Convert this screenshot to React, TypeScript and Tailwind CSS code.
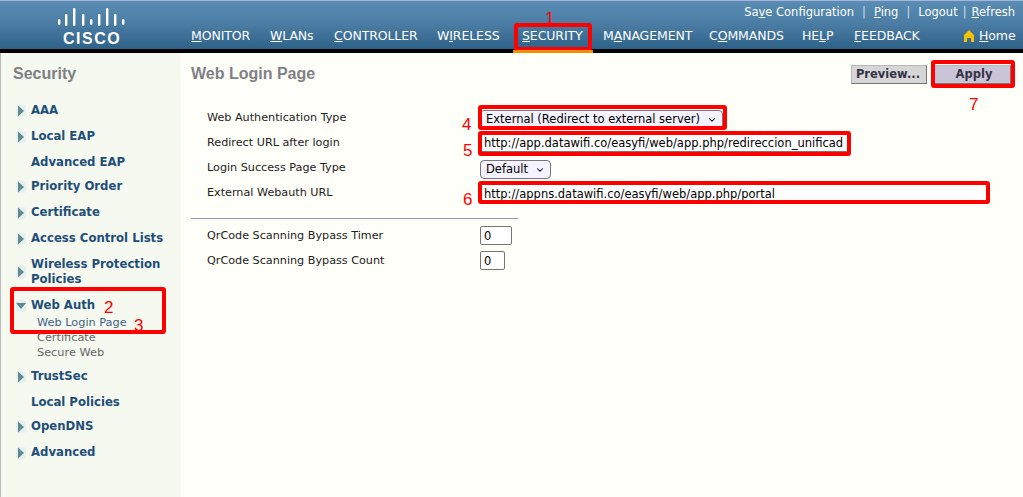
import { ChevronDown } from 'lucide-react';

const font = "font-['DejaVu_Sans',Verdana,sans-serif]";

const navItems = [
  { pre: '', key: 'M', post: 'ONITOR', w: 'w-[79px]' },
  { pre: '', key: 'W', post: 'LANs', w: 'w-[64px]' },
  { pre: '', key: 'C', post: 'ONTROLLER', w: 'w-[103px]' },
  { pre: 'W', key: 'I', post: 'RELESS', w: 'w-[85px]' },
  { pre: '', key: 'S', post: 'ECURITY', w: 'w-[81px]' },
  { pre: 'M', key: 'A', post: 'NAGEMENT', w: 'w-[106px]' },
  { pre: 'C', key: 'O', post: 'MMANDS', w: 'w-[93px]' },
  { pre: 'HE', key: 'L', post: 'P', w: 'w-[52px]' },
  { pre: '', key: 'F', post: 'EEDBACK', w: 'w-[109px]' },
];

const sideItems = [
  { label: 'AAA', arrow: true, h: 'h-[26px] pt-[2px]' },
  { label: 'Local EAP', arrow: true, h: 'h-[26px] pt-[2px]' },
  { label: 'Advanced EAP', arrow: false, h: 'h-[24px] pt-[4px]' },
  { label: 'Priority Order', arrow: true, h: 'h-[26px] pt-[2px]' },
  { label: 'Certificate', arrow: true, h: 'h-[26px] pt-[2px]' },
  { label: 'Access Control Lists', arrow: true, h: 'h-[26px] pt-[2px]' },
];

const sideItemsBottom = [
  { label: 'TrustSec', arrow: true, h: 'h-[26px] pt-[2px]' },
  { label: 'Local Policies', arrow: false, h: 'h-[24px] pt-[4px]' },
  { label: 'OpenDNS', arrow: true, h: 'h-[26px] pt-[2px]' },
  { label: 'Advanced', arrow: true, h: 'h-[26px] pt-[2px]' },
];

const Arrow = ({ down }: { down?: boolean }) => (
  <svg width="10" height="12" viewBox="0 0 10 12" className="shrink-0">
    <rect x="0" y="0" width="10" height="12" rx="3" fill="#e6f0ee" />
    {down ? <path d="M0 3h10L5 9z" fill="#5f8a90" /> : <path d="M2 0.5v11L8 6z" fill="#5f8a90" />}
  </svg>
);

const SideRow = ({ label, arrow, h }: { label: string; arrow: boolean; h: string }) => (
  <div className={`flex items-center ${h}`}>
    <div className="w-[16px] pl-[1px] shrink-0">{arrow && <Arrow />}</div>
    <span className="text-[11.7px] font-bold text-[#1f4e79]">{label}</span>
  </div>
);

const logoBars = [
  [59, 18, 6], [66, 13, 12], [74, 7, 18], [83, 13, 12], [91, 18, 6],
  [99, 13, 12], [107, 7, 18], [115, 13, 12], [123, 18, 6],
];

const Logo = () => (
  <svg width="68" height="25" viewBox="57 0 68 25" fill="#fff" className="block">
    {logoBars.map(([x, y, h]) => (
      <rect key={x} x={x - 1} y={y} width="2.4" height={h} rx="1.2" />
    ))}
  </svg>
);

const Red = ({ className }: { className: string }) => (
  <div className={`absolute border-[4px] border-[#f00] rounded-[3px] ${className}`} />
);

const Num = ({ n, className }: { n: string; className: string }) => (
  <span className={`absolute font-['Liberation_Sans',sans-serif] text-[17px] leading-none text-[#f00] ${className}`}>{n}</span>
);

const Select = ({ label, className }: { label: string; className: string }) => (
  <div className={`relative ${className}`}>
    <select
      defaultValue={label}
      className={`block appearance-none w-full h-[19px] border border-[#767676] rounded-[4px] bg-[#f4f2ff] pl-[5px] text-[11.5px] text-black ${font}`}
    >
      <option value={label}>{label}</option>
    </select>
    <ChevronDown size={10} strokeWidth={2.5} className="absolute right-[6px] top-[5px] text-black pointer-events-none" />
  </div>
);

const rowClass = 'flex items-center h-[25px]';
const labelClass = 'w-[273px] shrink-0 pt-[2px] text-[11.2px] text-[#222]';
const inputClass = `h-[19px] border border-[#767676] rounded-[2px] bg-white px-[3px] text-[11.5px] text-black ${font}`;

export default function App() {
  return (
    <div className={`relative w-[1023px] h-[497px] overflow-hidden bg-[#fffffa] ${font}`}>
      <div className="h-px bg-[#a9b4dc]" />
      <header className="relative h-[48px] flex bg-gradient-to-b from-[#5a8db4] via-[#4a7ca3] to-[#2f6289]">
        <div className="w-[191px] shrink-0 flex flex-col items-start pl-[57px]">
          <Logo />
          <span className="font-['Liberation_Sans',sans-serif] font-bold text-[16px] leading-[16px] tracking-[1.5px] text-white ml-[6px] mt-[5px]">CISCO</span>
        </div>
        <div className="flex-1 flex flex-col">
          <div className="h-[22px] pt-[2px] flex justify-end items-center pr-[8px] text-[11.5px] text-white">
            <span>Sa<u>v</u>e Configuration</span>
            <span className="mx-[8px] text-[#cde]">|</span>
            <span><u>P</u>ing</span>
            <span className="mx-[8px] text-[#cde]">|</span>
            <span>Logout</span>
            <span className="mx-[5px] text-[#cde]">|</span>
            <span><u>R</u>efresh</span>
          </div>
          <nav className="flex-1 flex items-center text-[12.5px] text-white tracking-[-0.1px]">
            {navItems.map((it) => (
              <span key={it.key + it.post} className={`${it.w} shrink-0 whitespace-nowrap`}>
                {it.pre}<u>{it.key}</u>{it.post}
              </span>
            ))}
            <span className="flex items-center gap-[4px] whitespace-nowrap">
              <svg width="12" height="12" viewBox="0 0 12 12"><path d="M6 0l5 5v7H8V8H4v4H1V5z" fill="#f2c200" /></svg>
              <span><u>H</u>ome</span>
            </span>
          </nav>
        </div>
        <div className="absolute left-[513px] w-[80px] bottom-[-4px] h-[3px] bg-[#f09000] z-10" />
      </header>
      <div className="h-[4px] bg-black" />
      <div className="flex h-[444px]">
        <aside className="w-[181px] shrink-0 bg-[#f5f9f0] border-l border-[#bbb] pl-[14px] pt-[11px]">
          <div className="font-['Liberation_Sans',sans-serif] font-bold text-[16px] leading-[20px] text-[#7f7f85] ml-[-2px]">Security</div>
          <div className="mt-[13px]">
            {sideItems.map((s) => <SideRow key={s.label} {...s} />)}
            <div className="flex items-center h-[40px] pt-[2px]">
              <div className="w-[16px] pl-[1px] shrink-0"><Arrow /></div>
              <span className="text-[11.7px] leading-[15px] font-bold text-[#1f4e79]">Wireless Protection<br />Policies</span>
            </div>
            <div className="flex items-center h-[24px] mt-[2px] pt-[2px]">
              <div className="w-[16px] pl-[1px] shrink-0"><Arrow down /></div>
              <span className="text-[11.7px] font-bold text-[#1f4e79]">Web Auth</span>
            </div>
            <div className="pl-[22px] text-[11.3px] leading-[15px] text-[#666] mt-[-2px] mb-[3px]">
              <div className="text-[#3f6485]">Web Login Page</div>
              <div>Certificate</div>
              <div>Secure Web</div>
            </div>
            {sideItemsBottom.map((s) => <SideRow key={s.label} {...s} />)}
          </div>
        </aside>
        <main className="flex-1 pl-[10px] pt-[11px]">
          <div className="flex items-start h-[41px]">
            <h1 className="font-['Liberation_Sans',sans-serif] font-bold text-[16px] leading-[20px] text-[#7f7f85]">Web Login Page</h1>
            <div className="ml-auto flex items-start gap-[7px] pr-[12px] pt-[1px]">
              <button className="w-[76px] h-[19px] pt-[1px] pr-[2px] bg-[#d6d6d6] border border-[#b8b8b8] border-r-[#777] border-b-[#777] text-[11.5px] font-bold text-[#333348] leading-none">Preview...</button>
              <button className="w-[77px] h-[19px] pt-[1px] pl-[3px] bg-[#c9c5d6] border border-[#bbb] border-r-[#777] border-b-[#777] text-[11.5px] font-bold text-[#333348] leading-none">Apply</button>
            </div>
          </div>
          <div className="pl-[16px]">
            <div className={rowClass}>
              <span className={labelClass}>Web Authentication Type</span>
              <Select label="External (Redirect to external server)" className="w-[243px] mt-[4px]" />
            </div>
            <div className={rowClass}>
              <span className={labelClass}>Redirect URL after login</span>
              <input readOnly className={`${inputClass} w-[368px]`} value="http://app.datawifi.co/easyfi/web/app.php/redireccion_unificad" />
            </div>
            <div className={rowClass}>
              <span className={labelClass}>Login Success Page Type</span>
              <Select label="Default" className="w-[71px] mt-[3px]" />
            </div>
            <div className={rowClass}>
              <span className={labelClass}>External Webauth URL</span>
              <input readOnly className={`${inputClass} w-[508px] mt-[2px]`} value="http://appns.datawifi.co/easyfi/web/app.php/portal" />
            </div>
          </div>
          <div className="w-[327px] h-px bg-[#9a9ab8] mt-[13px] mb-[4px]" />
          <div className="pl-[16px]">
            <div className={rowClass}>
              <span className={labelClass}>QrCode Scanning Bypass Timer</span>
              <input readOnly className={`${inputClass} w-[32px]`} value="0" />
            </div>
            <div className={rowClass}>
              <span className={labelClass}>QrCode Scanning Bypass Count</span>
              <input readOnly className={`${inputClass} w-[25px]`} value="0" />
            </div>
          </div>
        </main>
      </div>
      <Red className="left-[514px] top-[23px] w-[78px] h-[28px]" />
      <Red className="left-[931px] top-[60px] w-[84px] h-[28px]" />
      <Red className="left-[478px] top-[105px] w-[249px] h-[25px]" />
      <Red className="left-[478px] top-[131px] w-[373px] h-[25px]" />
      <Red className="left-[478px] top-[181px] w-[512px] h-[23px]" />
      <Red className="left-[10px] top-[287px] w-[156px] h-[47px]" />
      <Num n="1" className="left-[545px] top-[10px]" />
      <Num n="2" className="left-[104px] top-[299px]" />
      <Num n="3" className="left-[134px] top-[317px]" />
      <Num n="4" className="left-[462px] top-[116px]" />
      <Num n="5" className="left-[463px] top-[142px]" />
      <Num n="6" className="left-[463px] top-[191px]" />
      <Num n="7" className="left-[969px] top-[96px]" />
    </div>
  );
}
